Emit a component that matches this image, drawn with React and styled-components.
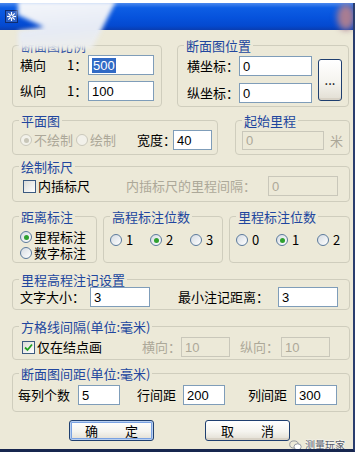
import React from 'react';
import styled, { createGlobalStyle } from 'styled-components';

const GlobalStyle = createGlobalStyle`
  html, body { margin: 0; padding: 0; background: #fff; }
  body {
    font-family: "Noto Sans CJK SC", "Liberation Sans", sans-serif;
    font-size: 13px;
    color: #000;
  }
`;

const Window = styled.div`
  position: relative;
  box-sizing: border-box;
  width: 355px;
  height: 449px;
  margin-top: 3px;
  background: #ece9d8;
  border-right: 2px solid #2a3d6e;
  border-bottom: 3px solid #17264f;
  display: flex;
  flex-direction: column;
  overflow: hidden;
`;

const TitleBar = styled.div`
  height: 27px;
  flex: none;
  display: flex;
  align-items: center;
  padding-left: 5px;
  background: linear-gradient(180deg, #4a88ee 0%, #0d5ee4 18%, #0652dc 55%, #0449cf 85%, #0a3db0 100%);
`;

const CloseBlob = styled.span`
  margin-left: auto;
  margin-right: -2px;
  width: 18px;
  height: 26px;
  border-radius: 50%;
  background: #a87d92;
  filter: blur(3px);
`;

/* light glare smeared over the title bar and the first group title */
const GlareBlur = styled.div`
  position: absolute;
  left: 16px;
  top: -2px;
  width: 104px;
  height: 50px;
  filter: blur(2px);
  pointer-events: none;
`;

const GlareShape = styled.div`
  width: 100%;
  height: 100%;
  background: linear-gradient(175deg, #f5f7fb 0%, #e6ebf5 55%, #f0efe9 100%);
  clip-path: polygon(2px 0, 100px 0, 76px 48px, 2px 48px, 2px 30px, 28px 26px, 2px 14px);
`;

const Body = styled.div`
  flex: 1;
  padding: 9px 0 0 12px;
  display: flex;
  flex-direction: column;
`;

const Row = styled.div`
  display: flex;
  gap: ${p => p.$gap || 0}px;
  margin-top: ${p => p.$mt || 0}px;
`;

const Group = styled.fieldset`
  box-sizing: border-box;
  margin: 0;
  padding: 0;
  width: ${p => p.$w}px;
  height: ${p => p.$h}px;
  border: 1px solid #cfcdbd;
  border-radius: 4px;
  min-inline-size: 0;
`;

const Legend = styled.legend`
  padding: 0 2px;
  margin-left: 6px;
  font-size: 13px;
  line-height: 13px;
  color: #21469e;
  white-space: nowrap;
`;

const Content = styled.div`
  display: flex;
  flex-direction: ${p => p.$col ? 'column' : 'row'};
  align-items: ${p => p.$col ? 'flex-start' : 'center'};
  gap: ${p => p.$gap || 0}px;
  padding: ${p => p.$pt || 0}px 0 0 ${p => p.$pl || 0}px;
`;

const FormGrid = styled.div`
  display: grid;
  grid-template-columns: ${p => p.$cols};
  row-gap: ${p => p.$rg}px;
  align-items: center;
`;

const Label = styled.span`
  flex: none;
  width: ${p => p.$w ? p.$w + 'px' : 'auto'};
  margin-left: ${p => p.$ml || 0}px;
  color: ${p => p.$disabled ? '#aca899' : '#000'};
  font-size: 13px;
  line-height: 14px;
  white-space: nowrap;
`;

const Field = styled.div`
  box-sizing: border-box;
  flex: none;
  width: ${p => p.$w}px;
  height: ${p => p.$h || 20}px;
  margin-left: ${p => p.$ml || 0}px;
  border: 1px solid ${p => p.$disabled ? '#c9c7ba' : '#7f9db9'};
  background: ${p => p.$disabled ? '#ece9d8' : '#fff'};
  color: ${p => p.$disabled ? '#aca899' : '#000'};
  font-family: "Liberation Sans", sans-serif;
  font-size: 13px;
  padding-left: 3px;
  display: flex;
  align-items: center;
`;

const Selected = styled.span`
  background: #316ac5;
  color: #fff;
  padding: 0 1px;
  line-height: 15px;
`;

const Choice = styled.label`
  display: inline-flex;
  align-items: center;
  gap: ${p => p.$gap ?? 2}px;
  width: ${p => p.$w ? p.$w + 'px' : 'auto'};
  height: ${p => p.$h ? p.$h + 'px' : 'auto'};
  color: ${p => p.$disabled ? '#aca899' : '#000'};
  font-size: 13px;
  line-height: 14px;
  white-space: nowrap;
`;

const RadioDot = styled.span`
  box-sizing: border-box;
  flex: none;
  width: 12px;
  height: 12px;
  border-radius: 50%;
  border: 1px solid ${p => p.$disabled ? '#cac8bb' : '#5b7a9c'};
  background: ${p => p.$disabled ? '#f2f1ea' : 'linear-gradient(135deg, #d5dbe2, #ffffff)'};
  display: inline-flex;
  align-items: center;
  justify-content: center;
  &::after {
    content: '';
    width: 5px;
    height: 5px;
    border-radius: 50%;
    background: ${p => p.$disabled ? '#c8c6b8' : '#2fa12f'};
    display: ${p => p.$checked ? 'block' : 'none'};
  }
`;

const CheckBox = styled.span`
  box-sizing: border-box;
  flex: none;
  width: 13px;
  height: 13px;
  border: 1px solid #3c5a80;
  background: linear-gradient(135deg, #dcdcd7, #ffffff);
  display: inline-flex;
  align-items: center;
  justify-content: center;
`;

const Button = styled.button`
  box-sizing: border-box;
  width: ${p => p.$w}px;
  height: ${p => p.$h}px;
  margin: 0 0 0 ${p => p.$ml || 0}px;
  padding: 0;
  flex: none;
  border: 1px solid #1f3f6f;
  border-radius: 3px;
  background: linear-gradient(180deg, #ffffff 0%, #f5f4ef 55%, #e2ded3 100%);
  box-shadow: ${p => p.$default ? 'inset 0 0 0 1px #b8cff0, inset 0 0 0 2px #7aa2e2' : 'inset 0 -2px 0 #d8d2c6'};
  font-family: "Noto Sans CJK SC", sans-serif;
  font-size: 13px;
  color: #000;
  display: flex;
  align-items: center;
  justify-content: center;
  gap: ${p => p.$gap || 0}px;
`;

const ButtonRow = styled.div`
  display: flex;
  margin-top: 8px;
  padding-left: 57px;
`;

const Watermark = styled.div`
  position: absolute;
  right: 8px;
  bottom: -2px;
  display: flex;
  align-items: center;
  gap: 3px;
  font-size: 10px;
  line-height: 12px;
  color: #555b69;
  text-shadow: 0 0 2px #fff, 0 0 2px #fff;
`;

function Radio({ label, checked, disabled, w, h, gap }) {
  return (
    <Choice $disabled={disabled} $w={w} $h={h} $gap={gap}>
      <RadioDot $checked={checked} $disabled={disabled} />
      {label}
    </Choice>
  );
}

function Check({ label, checked }) {
  return (
    <Choice $gap={2}>
      <CheckBox>
        {checked && (
          <svg width="9" height="9" viewBox="0 0 9 9">
            <path d="M1 4.5 L3.5 7 L8 1.5" fill="none" stroke="#21a121" strokeWidth="1.8" />
          </svg>
        )}
      </CheckBox>
      {label}
    </Choice>
  );
}

function AppIcon() {
  return (
    <svg width="13" height="13" viewBox="0 0 13 13">
      <rect x="0.5" y="0.5" width="12" height="12" fill="#2c5fc4" stroke="#0e2c70" />
      <g stroke="#fff" strokeWidth="1.2">
        <line x1="6.5" y1="2" x2="6.5" y2="11" />
        <line x1="2" y1="6.5" x2="11" y2="6.5" />
        <line x1="3.3" y1="3.3" x2="9.7" y2="9.7" />
        <line x1="9.7" y1="3.3" x2="3.3" y2="9.7" />
      </g>
      <circle cx="6.5" cy="6.5" r="1.6" fill="#2c5fc4" stroke="#fff" />
    </svg>
  );
}

export default function App() {
  return (
    <>
      <GlobalStyle />
      <Window>
        <TitleBar>
          <AppIcon />
          <CloseBlob />
        </TitleBar>

        <Body>
          <Row $gap={15}>
            <Group $w={150} $h={68}>
              <Legend>断面图比例</Legend>
              <Content $pt={3} $pl={7}>
                <FormGrid $cols="47px 21px 66px" $rg={6}>
                  <Label>横向</Label>
                  <Label>1：</Label>
                  <Field $w={66}><Selected>500</Selected></Field>
                  <Label>纵向</Label>
                  <Label>1：</Label>
                  <Field $w={66}>100</Field>
                </FormGrid>
              </Content>
            </Group>
            <Group $w={172} $h={68}>
              <Legend>断面图位置</Legend>
              <Content $pt={4} $pl={9}>
                <FormGrid $cols="52px 73px" $rg={7}>
                  <Label>横坐标：</Label>
                  <Field $w={73}>0</Field>
                  <Label>纵坐标：</Label>
                  <Field $w={73}>0</Field>
                </FormGrid>
                <Button $w={24} $h={42} $ml={6}>...</Button>
              </Content>
            </Group>
          </Row>

          <Row $gap={17} $mt={7}>
            <Group $w={206} $h={41}>
              <Legend>平面图</Legend>
              <Content $pt={3} $pl={7}>
                <Radio label="不绘制" checked disabled w={56} />
                <Radio label="绘制" disabled w={50} />
                <Label $w={36} $ml={11}>宽度：</Label>
                <Field $w={39}>40</Field>
              </Content>
            </Group>
            <Group $w={115} $h={41}>
              <Legend>起始里程</Legend>
              <Content $pt={4} $pl={6}>
                <Field $w={82} $h={19} $disabled>0</Field>
                <Label $ml={6} $disabled>米</Label>
              </Content>
            </Group>
          </Row>

          <Row $mt={5}>
            <Group $w={338} $h={42}>
              <Legend>绘制标尺</Legend>
              <Content $pt={3} $pl={10}>
                <Check label="内插标尺" />
                <Label $ml={36} $w={142} $disabled>内插标尺的里程间隔：</Label>
                <Field $w={70} $disabled>0</Field>
              </Content>
            </Group>
          </Row>

          <Row $gap={6} $mt={8}>
            <Group $w={85} $h={53}>
              <Legend>距离标注</Legend>
              <Content $col $pt={6} $pl={7}>
                <Radio label="里程标注" checked h={16} />
                <Radio label="数字标注" h={16} />
              </Content>
            </Group>
            <Group $w={120} $h={53}>
              <Legend>高程标注位数</Legend>
              <Content $pt={10} $pl={6}>
                <Radio label="1" w={40} gap={4} />
                <Radio label="2" checked w={40} gap={4} />
                <Radio label="3" w={30} gap={4} />
              </Content>
            </Group>
            <Group $w={121} $h={53}>
              <Legend>里程标注位数</Legend>
              <Content $pt={10} $pl={6}>
                <Radio label="0" w={40} gap={4} />
                <Radio label="1" checked w={41} gap={4} />
                <Radio label="2" w={30} gap={4} />
              </Content>
            </Group>
          </Row>

          <Row $mt={10}>
            <Group $w={338} $h={37}>
              <Legend>里程高程注记设置</Legend>
              <Content $pt={1} $pl={7}>
                <Label $w={70}>文字大小：</Label>
                <Field $w={60}>3</Field>
                <Label $w={100} $ml={28}>最小注记距离：</Label>
                <Field $w={60}>3</Field>
              </Content>
            </Group>
          </Row>

          <Row $mt={10}>
            <Group $w={338} $h={40}>
              <Legend>方格线间隔(单位:毫米)</Legend>
              <Content $pt={4} $pl={9}>
                <Check label="仅在结点画" checked />
                <Label $w={39} $ml={40} $disabled>横向：</Label>
                <Field $w={49} $disabled>10</Field>
                <Label $w={41} $ml={10} $disabled>纵向：</Label>
                <Field $w={49} $disabled>10</Field>
              </Content>
            </Group>
          </Row>

          <Row $mt={7}>
            <Group $w={338} $h={45}>
              <Legend>断面图间距(单位:毫米)</Legend>
              <Content $pt={5} $pl={5}>
                <Label $w={60}>每列个数</Label>
                <Field $w={42}>5</Field>
                <Label $w={46} $ml={17}>行间距</Label>
                <Field $w={42}>200</Field>
                <Label $w={47} $ml={23}>列间距</Label>
                <Field $w={42}>300</Field>
              </Content>
            </Group>
          </Row>

          <ButtonRow>
            <Button $w={85} $h={21} $gap={27} $default>
              <span>确</span><span>定</span>
            </Button>
            <Button $w={85} $h={21} $gap={27} $ml={51}>
              <span>取</span><span>消</span>
            </Button>
          </ButtonRow>
        </Body>

        <GlareBlur>
          <GlareShape />
        </GlareBlur>

        <Watermark>
          <svg width="13" height="11" viewBox="0 0 13 11">
            <ellipse cx="5" cy="4.5" rx="4.3" ry="3.6" fill="none" stroke="#8a8f99" strokeWidth="0.9" />
            <ellipse cx="8.6" cy="6.8" rx="3.6" ry="3" fill="#fff" stroke="#8a8f99" strokeWidth="0.9" />
          </svg>
          <span>测量玩家</span>
        </Watermark>
      </Window>
    </>
  );
}
